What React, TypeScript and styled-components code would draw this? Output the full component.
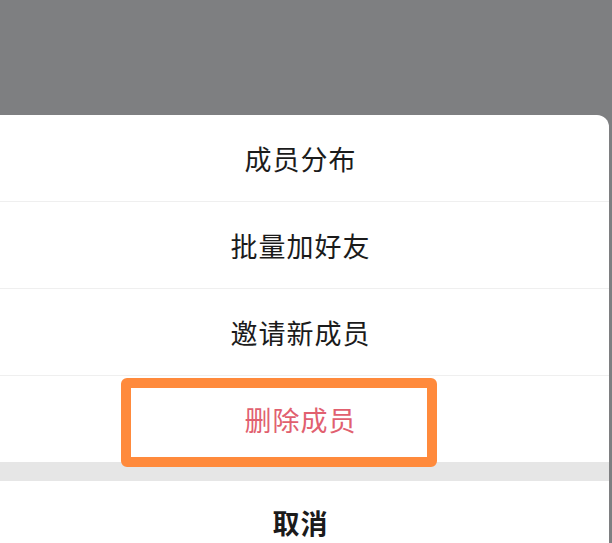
import styled, { createGlobalStyle } from "styled-components";

const GlobalStyle = createGlobalStyle`
  html, body {
    margin: 0;
    padding: 0;
    background: #7e7f81;
    overflow: hidden;
  }
  body {
    font-family: "Noto Sans CJK SC", "Noto Sans", sans-serif;
  }
`;

const Screen = styled.div`
  width: 612px;
  height: 543px;
  background: #7e7f81;
  display: flex;
  flex-direction: column;
  justify-content: flex-end;
  overflow: hidden;
`;

const Sheet = styled.div`
  margin-left: -8px;
  width: 617px;
  height: 428px;
  background: #ffffff;
  border-radius: 0 12px 0 0;
  display: flex;
  flex-direction: column;
  overflow: hidden;
`;

const Item = styled.div<{ $danger?: boolean; $bold?: boolean; $last?: boolean }>`
  position: relative;
  flex: 0 0 ${(p) => (p.$last ? "86px" : "87px")};
  box-sizing: border-box;
  display: flex;
  align-items: center;
  justify-content: center;
  border-bottom: ${(p) => (p.$last ? "none" : "1px solid #efefef")};
  font-size: 27px;
  letter-spacing: 1px;
  font-weight: ${(p) => (p.$bold ? 700 : 400)};
  color: ${(p) => (p.$danger ? "#e1606f" : "#1b1b1b")};
`;

const Gap = styled.div`
  flex: 0 0 19px;
  background: #e6e6e6;
`;

const CancelItem = styled(Item)`
  flex: 1 1 auto;
  align-items: flex-start;
  padding-top: 22px;
  border-bottom: none;
`;

const Highlight = styled.div`
  position: absolute;
  left: 129px;
  top: 2px;
  width: 316px;
  height: 89px;
  box-sizing: border-box;
  border: 10px solid #ff8a3c;
  border-radius: 6px;
  z-index: 2;
  pointer-events: none;
`;

export default function App() {
  return (
    <>
      <GlobalStyle />
      <Screen>
        <Sheet>
          <Item>成员分布</Item>
          <Item>批量加好友</Item>
          <Item>邀请新成员</Item>
          <Item $danger $last>
            删除成员
            <Highlight />
          </Item>
          <Gap />
          <CancelItem $bold>取消</CancelItem>
        </Sheet>
      </Screen>
    </>
  );
}
